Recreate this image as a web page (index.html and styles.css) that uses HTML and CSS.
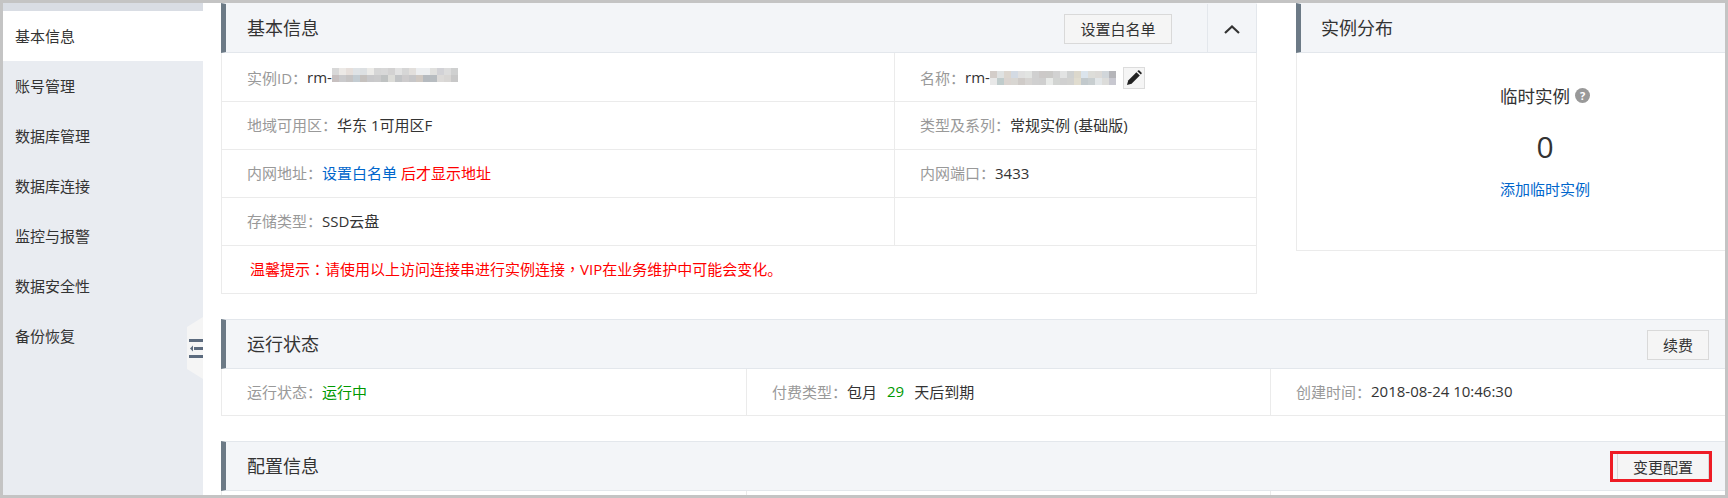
FILE: index.html
```html
<!DOCTYPE html>
<html lang="zh-CN">
<head>
    <meta charset="UTF-8">
    <title>基本信息</title>
    <link rel="stylesheet" href="styles.css">
</head>
<body>
    <div class="frame">
        <aside class="sidebar">
            <a class="nav-item active">基本信息</a>
            <a class="nav-item">账号管理</a>
            <a class="nav-item">数据库管理</a>
            <a class="nav-item">数据库连接</a>
            <a class="nav-item">监控与报警</a>
            <a class="nav-item">数据安全性</a>
            <a class="nav-item">备份恢复</a>
            <svg class="collapse" width="16" height="62" viewBox="0 0 16 62">
                <polygon points="16,0 16,62 0,52 0,10" fill="#f5f5f5"/>
                <rect x="2" y="22" width="14" height="3" fill="#5c6b7e"/>
                <rect x="7" y="30" width="9" height="3" fill="#5c6b7e"/>
                <polygon points="6,28.5 6,34.5 3,31.5" fill="#5c6b7e"/>
                <rect x="2" y="38" width="14" height="3" fill="#5c6b7e"/>
            </svg>
        </aside>

        <main class="content">
            <div class="top-row">
                <section class="panel panel-basic">
                    <div class="panel-head">
                        <h3>基本信息</h3>
                        <button class="btn btn-white">设置白名单</button>
                        <div class="head-toggle">
                            <svg width="16" height="9" viewBox="0 0 16 9"><polyline points="1,8 8,1.5 15,8" fill="none" stroke="#333" stroke-width="2.2"/></svg>
                        </div>
                    </div>
                    <div class="info-row">
                        <div class="cell">
                            <span class="label">实例ID：</span>rm-<svg class="mosaic" width="126" height="14" viewBox="0 0 18 2" preserveAspectRatio="none" shape-rendering="crispEdges">
                                <rect x="0" y="0" width="1" height="1" fill="#d8d8d8"/><rect x="1" y="0" width="1" height="1" fill="#ece9e6"/><rect x="2" y="0" width="1" height="1" fill="#e6dfdb"/><rect x="3" y="0" width="1" height="1" fill="#dfe3e6"/><rect x="4" y="0" width="1" height="1" fill="#dde0e2"/><rect x="5" y="0" width="1" height="1" fill="#ecebe8"/><rect x="6" y="0" width="1" height="1" fill="#d6d6d6"/><rect x="7" y="0" width="1" height="1" fill="#d8d8d8"/><rect x="8" y="0" width="1" height="1" fill="#d3d2d2"/><rect x="9" y="0" width="1" height="1" fill="#e2e2e2"/><rect x="10" y="0" width="1" height="1" fill="#d6d6d6"/><rect x="11" y="0" width="1" height="1" fill="#e2dfdc"/><rect x="12" y="0" width="1" height="1" fill="#eceef0"/><rect x="13" y="0" width="1" height="1" fill="#eceef0"/><rect x="14" y="0" width="1" height="1" fill="#e0e0de"/><rect x="15" y="0" width="1" height="1" fill="#d2d2d6"/><rect x="16" y="0" width="1" height="1" fill="#dcdcdc"/><rect x="17" y="0" width="1" height="1" fill="#cfd0d0"/>
                                <rect x="0" y="1" width="1" height="1" fill="#c7c0c0"/><rect x="1" y="1" width="1" height="1" fill="#cacacc"/><rect x="2" y="1" width="1" height="1" fill="#c6c4c4"/><rect x="3" y="1" width="1" height="1" fill="#c3ccd2"/><rect x="4" y="1" width="1" height="1" fill="#c5c1be"/><rect x="5" y="1" width="1" height="1" fill="#c8c8ca"/><rect x="6" y="1" width="1" height="1" fill="#cacacb"/><rect x="7" y="1" width="1" height="1" fill="#bfc2c2"/><rect x="8" y="1" width="1" height="1" fill="#dcdcd8"/><rect x="9" y="1" width="1" height="1" fill="#c2c4c6"/><rect x="10" y="1" width="1" height="1" fill="#cdcbcc"/><rect x="11" y="1" width="1" height="1" fill="#c6c6c8"/><rect x="12" y="1" width="1" height="1" fill="#cfc8c2"/><rect x="13" y="1" width="1" height="1" fill="#b5babf"/><rect x="14" y="1" width="1" height="1" fill="#b7bcc0"/><rect x="15" y="1" width="1" height="1" fill="#dcdad8"/><rect x="16" y="1" width="1" height="1" fill="#d8d6d4"/><rect x="17" y="1" width="1" height="1" fill="#c8c8c8"/>
                            </svg>
                        </div>
                        <div class="cell">
                            <span class="label">名称：</span>rm-<svg class="mosaic mosaic-low" width="126" height="14" viewBox="0 0 18 2" preserveAspectRatio="none" shape-rendering="crispEdges">
                                <rect x="0" y="0" width="1" height="1" fill="#d3cdc9"/><rect x="1" y="0" width="1" height="1" fill="#dfe2e2"/><rect x="2" y="0" width="1" height="1" fill="#dcd6cf"/><rect x="3" y="0" width="1" height="1" fill="#d3dae3"/><rect x="4" y="0" width="1" height="1" fill="#e0e0e0"/><rect x="5" y="0" width="1" height="1" fill="#e2e4e2"/><rect x="6" y="0" width="1" height="1" fill="#d0d0d0"/><rect x="7" y="0" width="1" height="1" fill="#ccc9c8"/><rect x="8" y="0" width="1" height="1" fill="#cbcac8"/><rect x="9" y="0" width="1" height="1" fill="#d2d2d2"/><rect x="10" y="0" width="1" height="1" fill="#e2e3e3"/><rect x="11" y="0" width="1" height="1" fill="#cfd1d1"/><rect x="12" y="0" width="1" height="1" fill="#dcd8cc"/><rect x="13" y="0" width="1" height="1" fill="#dbe4ec"/><rect x="14" y="0" width="1" height="1" fill="#ddddd9"/><rect x="15" y="0" width="1" height="1" fill="#dcdad7"/><rect x="16" y="0" width="1" height="1" fill="#d1d6da"/><rect x="17" y="0" width="1" height="1" fill="#b5b5b9"/>
                                <rect x="0" y="1" width="1" height="1" fill="#e8e8e8"/><rect x="1" y="1" width="1" height="1" fill="#c0cccc"/><rect x="2" y="1" width="1" height="1" fill="#dad4d0"/><rect x="3" y="1" width="1" height="1" fill="#d8d6d2"/><rect x="4" y="1" width="1" height="1" fill="#cfcbc8"/><rect x="5" y="1" width="1" height="1" fill="#d6d4d2"/><rect x="6" y="1" width="1" height="1" fill="#d0d0d0"/><rect x="7" y="1" width="1" height="1" fill="#cfcfcf"/><rect x="8" y="1" width="1" height="1" fill="#e8eae8"/><rect x="9" y="1" width="1" height="1" fill="#d2d4d2"/><rect x="10" y="1" width="1" height="1" fill="#d0d0d0"/><rect x="11" y="1" width="1" height="1" fill="#d2d2d0"/><rect x="12" y="1" width="1" height="1" fill="#e0dccf"/><rect x="13" y="1" width="1" height="1" fill="#c2c9cc"/><rect x="14" y="1" width="1" height="1" fill="#c8ced0"/><rect x="15" y="1" width="1" height="1" fill="#e2e6e8"/><rect x="16" y="1" width="1" height="1" fill="#dcdcda"/><rect x="17" y="1" width="1" height="1" fill="#c8c8d0"/>
                            </svg>
                            <button class="btn-edit">
                                <svg width="16" height="16" viewBox="0 0 16 16" fill="#222"><path d="M1 15l1.2-4.6 8.2-8.2 3.4 3.4-8.2 8.2z"/><path d="M11.4 1.2l.6-.6a1 1 0 0 1 1.4 0l2 2a1 1 0 0 1 0 1.4l-.6.6z"/></svg>
                            </button>
                        </div>
                    </div>
                    <div class="info-row">
                        <div class="cell"><span class="label">地域可用区：</span>华东 1可用区F</div>
                        <div class="cell"><span class="label">类型及系列：</span>常规实例 (基础版)</div>
                    </div>
                    <div class="info-row">
                        <div class="cell"><span class="label">内网地址：</span><a class="link">设置白名单</a>&nbsp;<span class="red">后才显示地址</span></div>
                        <div class="cell"><span class="label">内网端口：</span>3433</div>
                    </div>
                    <div class="info-row">
                        <div class="cell"><span class="label">存储类型：</span>SSD云盘</div>
                        <div class="cell"></div>
                    </div>
                    <div class="tip red">温馨提示<span class="punct">：</span>请使用以上访问连接串进行实例连接<span class="punct">，</span>VIP在业务维护中可能会变化。</div>
                </section>

                <section class="panel panel-dist">
                    <div class="panel-head">
                        <h3>实例分布</h3>
                    </div>
                    <div class="dist-body">
                        <div class="dist-title">临时实例<span class="help">?</span></div>
                        <div class="dist-count">0</div>
                        <a class="link">添加临时实例</a>
                    </div>
                </section>
            </div>

            <section class="panel panel-wide">
                <div class="panel-head">
                    <h3>运行状态</h3>
                    <button class="btn btn-end">续费</button>
                </div>
                <div class="wide-row">
                    <div class="cell"><span class="label">运行状态：</span><span class="green">运行中</span></div>
                    <div class="cell"><span class="label">付费类型：</span>包月<span class="green days">29</span>天后到期</div>
                    <div class="cell"><span class="label">创建时间：</span>2018-08-24 10:46:30</div>
                </div>
            </section>

            <section class="panel panel-wide">
                <div class="panel-head">
                    <h3>配置信息</h3>
                    <button class="btn btn-end btn-marked">变更配置</button>
                </div>
                <div class="wide-row">
                    <div class="cell"></div>
                    <div class="cell"></div>
                    <div class="cell"></div>
                </div>
            </section>
        </main>
    </div>
</body>
</html>
```

FILE: styles.css
```css
* {
    box-sizing: border-box;
}
html, body {
    margin: 0;
    padding: 0;
    background: #fff;
}
body {
    font-family: "Open Sans", "Noto Sans CJK SC", sans-serif;
    font-size: 15px;
    color: #333;
}
.frame {
    display: flex;
    width: 1728px;
    height: 498px;
    border: 3px solid #c4c4c4;
    overflow: hidden;
}

/* sidebar */
.sidebar {
    position: relative;
    flex: none;
    width: 200px;
    background: #e9ecf1;
    border-top: 8px solid #d9dde4;
}
.nav-item {
    display: flex;
    align-items: center;
    height: 50px;
    padding: 0 0 2px 12px;
}
.nav-item.active {
    background: #fff;
}
.collapse {
    position: absolute;
    right: 0;
    top: 306px;
}

/* main */
.content {
    flex: 1;
    min-width: 0;
    padding-left: 18px;
}
.top-row {
    display: flex;
    gap: 39px;
}
.panel {
    border-left: 1px solid #ebebeb;
}
.panel-basic {
    flex: none;
    width: 1036px;
}
.panel-dist {
    flex: 1;
    min-width: 0;
    height: 248px;
    border-bottom: 1px solid #ebebeb;
}
.panel-wide {
    margin-top: 25px;
}
.panel-head {
    display: flex;
    align-items: center;
    height: 50px;
    margin-left: -1px;
    padding-left: 21px;
    background: #f3f5f8;
    border-left: 5px solid #6c7a86;
    border-top: 1px solid #e3e7ec;
    border-bottom: 1px solid #e3e7ec;
}
.top-row .panel-head {
    border-top-color: #f3f5f8;
}
.panel-dist .panel-head {
    padding-left: 20px;
}
.panel-head h3 {
    margin: 0;
    padding-bottom: 2px;
    font-size: 18px;
    font-weight: 400;
}
.btn {
    height: 30px;
    margin-top: 1px;
    padding: 0;
    font: inherit;
    color: #333;
    background: #f5f5f5;
    border: 1px solid #d9d9d9;
}
.btn-white {
    width: 108px;
    margin-left: auto;
    margin-right: 35px;
}
.btn-end {
    width: 62px;
    margin-left: auto;
    margin-right: 16px;
}
.btn-marked {
    position: relative;
    width: 92px;
}
.btn-marked::after {
    content: "";
    position: absolute;
    left: -8px;
    right: -4px;
    top: -2px;
    bottom: -1px;
    border: 3px solid #ee1c25;
}
.head-toggle {
    display: flex;
    align-items: center;
    justify-content: center;
    width: 50px;
    height: 48px;
    padding-top: 2px;
    border-left: 1px solid #e3e7ec;
    border-right: 1px solid #e3e7ec;
}
.info-row {
    display: grid;
    grid-template-columns: 672px 1fr;
    height: 48px;
    border-bottom: 1px solid #ebebeb;
    border-right: 1px solid #ebebeb;
}
.panel-head + .info-row {
    height: 49px;
}
.info-row .cell + .cell {
    border-left: 1px solid #ebebeb;
}
.info-row + .info-row .cell {
    padding-bottom: 2px;
}
.cell {
    display: flex;
    align-items: center;
    padding-left: 25px;
    white-space: pre;
}
.label {
    color: #999;
}
.link {
    color: #06c;
}
.red {
    color: #f00;
}
.green {
    color: #090;
}
.days {
    margin: 0 10px;
}
.mosaic {
    flex: none;
    margin-top: -4px;
}
.mosaic-low {
    margin-top: 2px;
}
.btn-edit {
    display: flex;
    align-items: center;
    justify-content: center;
    width: 22px;
    height: 22px;
    margin: 2px 0 0 7px;
    padding: 0;
    background: #f5f5f5;
    border: 1px solid #dcdcdc;
}
.tip {
    display: flex;
    align-items: center;
    height: 48px;
    padding: 0 0 2px 28px;
    border-bottom: 1px solid #ebebeb;
    border-right: 1px solid #ebebeb;
}
.punct {
    font-family: "Noto Sans CJK TC", sans-serif;
}
.dist-body {
    display: flex;
    flex-direction: column;
    align-items: center;
    padding-top: 30px;
    padding-left: 68px;
    overflow: hidden;
}
.dist-title {
    display: flex;
    align-items: center;
    gap: 5px;
    height: 24px;
    font-size: 17.5px;
}
.help {
    display: flex;
    align-items: center;
    justify-content: center;
    width: 15px;
    height: 15px;
    font-size: 11px;
    font-weight: 700;
    color: #fff;
    background: #999;
    border-radius: 50%;
}
.dist-count {
    margin: 16px 0 7px;
    font-size: 30px;
    line-height: 48px;
}
.wide-row {
    display: grid;
    grid-template-columns: 524px 524px 1fr;
    height: 47px;
    border-bottom: 1px solid #ebebeb;
}
.wide-row .cell {
    padding-bottom: 2px;
}
.wide-row .cell + .cell {
    border-left: 1px solid #ebebeb;
}
```
